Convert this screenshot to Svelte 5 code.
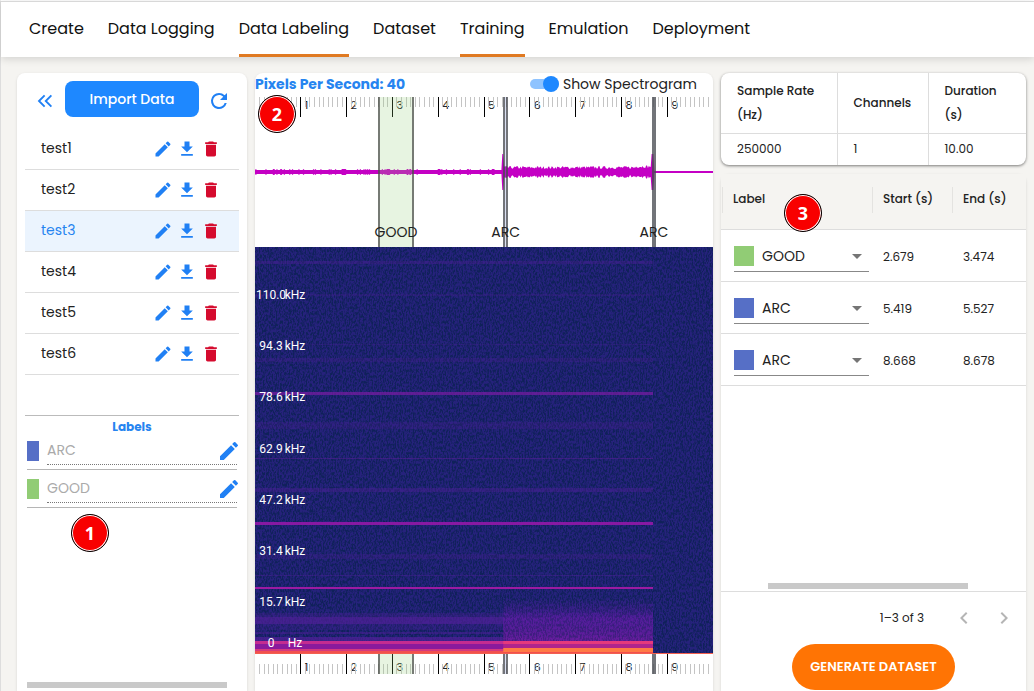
<script lang="ts">
type Segment = { id: number, label: string, start: number, end: number };

const duration = 10;
const navItems = [
    { name: 'Create', active: false },
    { name: 'Data Logging', active: false },
    { name: 'Data Labeling', active: true },
    { name: 'Dataset', active: false },
    { name: 'Training', active: true },
    { name: 'Emulation', active: false },
    { name: 'Deployment', active: false },
];
const files = ['test1', 'test2', 'test3', 'test4', 'test5', 'test6'];
const colors: Record<string, string> = { ARC: '#566fc6', GOOD: '#91cc75' };
const labels = ['ARC', 'GOOD'];

let selected = 'test3';
let showSpectrogram = true;
let segments: Segment[] = [
    { id: 1, label: 'GOOD', start: 2.679, end: 3.474 },
    { id: 2, label: 'ARC', start: 5.419, end: 5.527 },
    { id: 3, label: 'ARC', start: 8.668, end: 8.678 },
];

const ticks = Array.from({ length: 99 }, (_, i) => i + 1);

const frequencies = [
    { value: '110.0', unit: 'kHz', y: 52 },
    { value: '94.3', unit: 'kHz', y: 103 },
    { value: '78.6', unit: 'kHz', y: 154 },
    { value: '62.9', unit: 'kHz', y: 206 },
    { value: '47.2', unit: 'kHz', y: 257 },
    { value: '31.4', unit: 'kHz', y: 308 },
    { value: '15.7', unit: 'kHz', y: 359 },
    { value: '0', unit: 'Hz', y: 400 },
];

// harmonics that stop when the signal does
const bands = [
    { y: 14, h: 3, color: '#5a1fa0', opacity: 0.3 },
    { y: 47, h: 2, color: '#5a1fa0', opacity: 0.2 },
    { y: 97, h: 1, color: '#5a1fa0', opacity: 0.2 },
    { y: 111, h: 4, color: '#5a1fa0', opacity: 0.2 },
    { y: 145, h: 3, color: '#7a1ca4', opacity: 0.7 },
    { y: 175, h: 7, color: '#5a1fa0', opacity: 0.2 },
    { y: 211, h: 1, color: '#6a1fa0', opacity: 0.4 },
    { y: 241, h: 4, color: '#5a1fa0', opacity: 0.35 },
    { y: 275, h: 3, color: '#9318a8', opacity: 0.9 },
    { y: 307, h: 5, color: '#5a1fa0', opacity: 0.2 },
    { y: 328, h: 1, color: '#5a1fa0', opacity: 0.35 },
    { y: 340, h: 2, color: '#a31ba4', opacity: 0.95 },
    { y: 366, h: 4, color: '#5a1fa0', opacity: 0.25 },
    { y: 370, h: 7, color: '#5a1fa0', opacity: 0.6 },
    { y: 377, h: 6, color: '#5a1fa0', opacity: 0.2 },
    { y: 385, h: 2, color: '#5a1fa0', opacity: 0.4 },
    { y: 390, h: 4, color: '#5a1fa0', opacity: 0.6 },
    { y: 394, h: 3, color: '#c42c90', opacity: 1 },
    { y: 397, h: 5, color: '#8a1a9c', opacity: 1 },
    { y: 402, h: 2, color: '#d43a7e', opacity: 1 },
    { y: 404, h: 3, color: '#f2504f', opacity: 1 },
];

function percent(seconds: number) {
    return (seconds / duration) * 100 + '%';
}

function amplitude(t: number, noise: number) {
    if (Math.abs(t - 5.41) < 0.02 || Math.abs(t - 8.68) < 0.02) return 18;
    if (t < 5.4) return noise > 0.8 ? 3 : 2;
    if (t < 8.66) return 3 + noise * 3 + (t > 8.3 ? 1 : 0);
    return 1;
}

function waveform() {
    const top: string[] = [];
    const bottom: string[] = [];
    let seed = 7;
    for (let x = 0; x <= 500; x++) {
        seed = (seed * 16807) % 2147483647;
        const a = amplitude(x / 50, seed / 2147483647);
        top.push(`${x} ${(75 - a).toFixed(1)}`);
        bottom.unshift(`${x} ${(75 + a).toFixed(1)}`);
    }
    return 'M' + top.concat(bottom).join('L') + 'Z';
}

const wave = waveform();
</script>

{#snippet pencil()}
    <svg viewBox="0 0 24 24" aria-hidden="true"><path d="M3 17.25V21h3.75L17.81 9.94l-3.75-3.75L3 17.25zM20.71 7.04a1 1 0 0 0 0-1.41l-2.34-2.34a1 1 0 0 0-1.41 0l-1.83 1.83 3.75 3.75 1.83-1.83z" /></svg>
{/snippet}

{#snippet ruler(bottom: boolean)}
    <svg class="ruler" aria-hidden="true">
        {#each ticks as tick}
            {#if tick % 10 === 0}
                <line class="major" x1={tick + '%'} x2={tick + '%'} y1="0" y2="20" />
                <text x={tick + '%'} dx="4" y={bottom ? 17 : 12}>{tick / 10}</text>
            {:else}
                <line x1={tick + '%'} x2={tick + '%'} y1={bottom ? 10 : 0} y2={bottom ? 20 : 10} />
            {/if}
        {/each}
    </svg>
{/snippet}

<div class="app">
    <nav>
        {#each navItems as item}
            <a href="#{item.name}" class:active={item.active}>{item.name}</a>
        {/each}
    </nav>

    <main>
        <aside class="card files">
            <div class="toolbar">
                <button class="icon collapse" aria-label="Collapse">
                    <svg viewBox="0 0 24 24"><path d="M11.5 4.5 4 12l7.5 7.5M20.5 4.5 13 12l7.5 7.5" /></svg>
                </button>
                <button class="import">Import Data</button>
                <button class="icon refresh" aria-label="Refresh">
                    <svg viewBox="0 0 24 24"><path d="M17.65 6.35A7.96 7.96 0 0 0 12 4a8 8 0 1 0 7.73 10h-2.08A6 6 0 1 1 12 6c1.66 0 3.14.69 4.22 1.78L13 11h7V4l-2.35 2.35z" /></svg>
                </button>
            </div>

            <ul class="file-list">
                {#each files as file}
                    <li class:selected={file === selected}>
                        <button class="name" on:click={() => selected = file}>{file}</button>
                        <button class="icon" aria-label="Rename {file}">{@render pencil()}</button>
                        <button class="icon" aria-label="Download {file}">
                            <svg viewBox="0 0 24 24"><path d="M19 9h-4V3H9v6H5l7 7 7-7zM5 18v2h14v-2H5z" /></svg>
                        </button>
                        <button class="icon delete" aria-label="Delete {file}">
                            <svg viewBox="0 0 24 24"><path d="M6 19c0 1.1.9 2 2 2h8c1.100 0 2-.9 2-2V7H6v12zM19 4h-3.500l-1-1h-5l-1 1H5v2h14V4z" /></svg>
                        </button>
                    </li>
                {/each}
            </ul>

            <section class="labels">
                <h2>Labels</h2>
                {#each labels as label}
                    <div class="label-row">
                        <span class="swatch" style="background-color: {colors[label]}"></span>
                        <input type="text" placeholder={label} aria-label="Label {label}" />
                        <button class="icon" aria-label="Edit {label}">{@render pencil()}</button>
                    </div>
                {/each}
            </section>
            <div class="scrollbar"></div>
            <span class="badge one">1</span>
        </aside>

        <section class="card viewer">
            <header>
                <h2>Pixels Per Second: 40</h2>
                <label class="switch">
                    <input type="checkbox" bind:checked={showSpectrogram} />
                    Show Spectrogram
                </label>
            </header>

            <div class="track">
                {@render ruler(false)}
                <svg class="wave" viewBox="0 0 500 150" preserveAspectRatio="none" aria-hidden="true">
                    <path d={wave} />
                </svg>
                {#each segments as segment (segment.id)}
                    <div class="region" style="left: {percent(segment.start)}; width: {percent(segment.end - segment.start)}; background-color: {colors[segment.label]}38">
                        <span>{segment.label}</span>
                    </div>
                {/each}
                <span class="badge two">2</span>
            </div>

            {#if showSpectrogram}
                <svg class="spectrogram" role="img" aria-label="Spectrogram">
                    <defs>
                        <filter id="grain" x="0" y="0" width="100%" height="100%" color-interpolation-filters="sRGB">
                            <feTurbulence type="fractalNoise" baseFrequency="0.7 0.35" numOctaves="2" seed="4" />
                            <feColorMatrix values="0 0 0 0 0.04  0 0 0 0 0.13  0 0 0 0 0.32  4 0 0 0 -1.6" />
                        </filter>
                        <linearGradient id="burst" x1="0" y1="0" x2="0" y2="1">
                            <stop offset="0" stop-color="#5c1ca4" stop-opacity="0.05" />
                            <stop offset="0.4" stop-color="#5c1ca4" stop-opacity="0.6" />
                            <stop offset="1" stop-color="#6c1ca0" stop-opacity="0.9" />
                        </linearGradient>
                    </defs>
                    <rect width="100%" height="100%" fill="#26227c" />
                    <rect width="100%" height="100%" filter="url(#grain)" opacity="0.8" />
                    {#each bands as band}
                        <rect width="86.9%" y={band.y} height={band.h} fill={band.color} opacity={band.opacity} />
                    {/each}
                    <rect x="54.2%" width="32.7%" y="352" height="42" fill="url(#burst)" />
                    <rect x="54.2%" width="32.7%" y="352" height="42" filter="url(#grain)" opacity="0.35" />
                    <rect x="54.2%" width="32.7%" y="394" height="3" fill="#e5397c" />
                    <rect x="54.2%" width="32.7%" y="397" height="4" fill="#b0248c" />
                    <rect x="54.2%" width="32.7%" y="401" height="4" fill="#ff7a45" />
                    <rect width="100%" y="406" height="1" fill="#f2604f" />
                    {#each frequencies as f}
                        <text x="16" y={f.y}>{f.value}</text>
                        <text x="40" y={f.y}>{f.unit}</text>
                    {/each}
                </svg>
            {/if}

            <div class="track timeline">
                {@render ruler(true)}
                {#each segments as segment (segment.id)}
                    <div class="region" style="left: {percent(segment.start)}; width: {percent(segment.end - segment.start)}; background-color: {colors[segment.label]}38"></div>
                {/each}
            </div>
        </section>

        <div class="details">
            <div class="card info">
                <table>
                    <thead>
                        <tr><th>Sample Rate (Hz)</th><th>Channels</th><th>Duration (s)</th></tr>
                    </thead>
                    <tbody>
                        <tr><td>250000</td><td>1</td><td>10.00</td></tr>
                    </tbody>
                </table>
            </div>

            <div class="card segments">
                <table>
                    <thead>
                        <tr><th>Label</th><th>Start (s)</th><th>End (s)</th></tr>
                    </thead>
                    <tbody>
                        {#each segments as segment (segment.id)}
                            <tr>
                                <td>
                                    <div class="picker">
                                        <span class="swatch" style="background-color: {colors[segment.label]}"></span>
                                        <select bind:value={segment.label} aria-label="Segment label">
                                            {#each labels as label}
                                                <option>{label}</option>
                                            {/each}
                                        </select>
                                        <svg viewBox="0 0 10 5" aria-hidden="true"><path d="M0 0h10L5 5z" /></svg>
                                    </div>
                                </td>
                                <td>{segment.start.toFixed(3)}</td>
                                <td>{segment.end.toFixed(3)}</td>
                            </tr>
                        {/each}
                    </tbody>
                </table>
                <div class="scrollbar"></div>
                <div class="pager">
                    <span>1–3 of 3</span>
                    <button class="icon" aria-label="Previous page" disabled>
                        <svg viewBox="0 0 24 24"><path d="M15.41 7.41 14 6l-6 6 6 6 1.410-1.410L10.830 12z" /></svg>
                    </button>
                    <button class="icon" aria-label="Next page" disabled>
                        <svg viewBox="0 0 24 24"><path d="M10 6 8.590 7.410 13.170 12l-4.580 4.590L10 18l6-6z" /></svg>
                    </button>
                </div>
                <button class="generate">GENERATE DATASET</button>
                <span class="badge three">3</span>
            </div>
        </div>
    </main>
</div>

<style>
:global(body) {
    background-color: #f5f4f1;
    overflow: hidden;
}

.app, .app * {
    box-sizing: border-box;
}

.app {
    display: flex;
    flex-flow: column nowrap;
    height: 100vh;
    border-top: 1px solid #fff;
    border-left: 1px solid #ddd;
    color: #222;
    font-family: Poppins, Inter, sans-serif;
    font-size: 13px;
}

button, input, select {
    margin: 0;
    padding: 0;
    border: none;
    background: none;
    color: inherit;
    font: inherit;
}

h2 {
    margin: 0;
    color: #2684f0;
    font-weight: 700;
}

nav {
    display: flex;
    flex: none;
    gap: 24px;
    height: 56px;
    padding: 0 28px;
    border-top: 1px solid #d8d8d8;
    background-color: #fff;
    box-shadow: 0 2px 8px rgba(0, 0, 0, 0.14);
}

nav a {
    padding-top: 1px;
    border-bottom: 3px solid transparent;
    color: #111;
    font-size: 16px;
    line-height: 52px;
    text-decoration: none;
    white-space: nowrap;
}

nav a.active {
    border-color: #e07a22;
}

main {
    display: grid;
    grid-template-columns: 230px minmax(0, 1fr) 305px;
    gap: 8px;
    flex: 1;
    min-height: 0;
    padding: 16px 8px 0 16px;
}

.card {
    position: relative;
    border-radius: 8px;
    background-color: #fff;
    box-shadow: 0 1px 3px rgba(0, 0, 0, 0.12);
}

.icon {
    display: flex;
    align-items: center;
    justify-content: center;
    width: 24px;
    height: 24px;
    color: #2080f4;
}

.icon svg {
    width: 20px;
    height: 20px;
    fill: currentColor;
}

.badge {
    position: absolute;
    width: 38px;
    height: 38px;
    border: 1px solid #000;
    border-radius: 50%;
    background-color: #f80000;
    box-shadow: inset 0 0 0 1px #fff;
    color: #fff;
    font: 700 18px/36px "Noto Sans", sans-serif;
    text-align: center;
}

.badge.one {
    top: 441px;
    left: 54px;
}

.badge.two {
    top: -2px;
    left: 3px;
}

.badge.three {
    top: 20px;
    left: 63px;
}

.scrollbar {
    width: 200px;
    height: 6px;
    margin-top: auto;
    background-color: #c9c9c9;
}

.files {
    display: flex;
    flex-flow: column nowrap;
    padding: 8px 8px 3px;
    border-radius: 8px 8px 0 0;
}

.files .scrollbar {
    margin-left: 2px;
}

.toolbar {
    display: flex;
    align-items: center;
    gap: 8px;
    padding: 0 8px;
}

.toolbar .import {
    flex: 1;
    height: 36px;
    border-radius: 8px;
    background-color: #1e88ff;
    color: #fff;
    font-size: 14px;
    font-weight: 500;
}

.toolbar .icon {
    padding-top: 4px;
}

.toolbar .icon svg {
    width: 24px;
    height: 24px;
}

.toolbar .collapse svg {
    width: 18px;
    height: 18px;
    fill: none;
    stroke: currentColor;
    stroke-width: 2.5;
}

.file-list {
    margin: 12px 0 0;
    padding: 0;
    list-style: none;
}

.file-list li {
    display: flex;
    align-items: center;
    height: 41px;
    padding: 0 16px;
    border-bottom: 1px solid #ddd;
}

.file-list li.selected {
    background-color: #ebf4fe;
}

.file-list .name {
    flex: 1;
    padding-bottom: 2px;
    font-size: 14px;
    text-align: left;
}

.file-list .selected .name {
    color: #2684f0;
}

.file-list .delete {
    color: #d50b2e;
}

.labels {
    margin-top: 40px;
    border-top: 1px solid #bbb;
}

.labels h2 {
    font-size: 12px;
    line-height: 22px;
    text-align: center;
}

.label-row {
    display: flex;
    align-items: center;
    gap: 8px;
    position: relative;
    height: 32px;
    margin: 0 2px 6px;
    padding-bottom: 5px;
    border-bottom: 1px solid #b5b5b5;
}

.label-row .swatch {
    width: 12px;
    height: 20px;
}

.label-row input {
    flex: 1;
    min-width: 0;
    height: 27px;
    border-bottom: 1px dotted #777;
    font-size: 14px;
    outline: none;
}

.label-row input::placeholder {
    color: #aaa;
    opacity: 1;
}

.label-row .icon {
    position: absolute;
    right: -4px;
    top: 1px;
}

.label-row .icon svg {
    width: 24px;
    height: 24px;
}

.viewer {
    border-radius: 8px 8px 0 0;
}

.viewer header {
    display: flex;
    align-items: center;
    justify-content: space-between;
    height: 24px;
    padding: 0 16px 2px 0;
}

.viewer h2 {
    font-size: 14px;
}

.switch {
    display: flex;
    align-items: center;
    gap: 4px;
    font-size: 14px;
}

.switch input {
    position: relative;
    width: 29px;
    height: 10px;
    border-radius: 5px;
    background-color: #bbb;
    appearance: none;
}

.switch input::before {
    content: '';
    position: absolute;
    top: -3px;
    left: 0;
    width: 16px;
    height: 16px;
    border-radius: 50%;
    background-color: #777;
}

.switch input:checked {
    background-color: #8ec3ff;
}

.switch input:checked::before {
    left: 13px;
    background-color: #1e88ff;
}

.track {
    position: relative;
    height: 150px;
}

.timeline {
    height: 20px;
}

.ruler {
    display: block;
    width: 100%;
    height: 20px;
}

.ruler line {
    stroke: #c4c4c4;
    shape-rendering: crispEdges;
}

.ruler line.major {
    stroke: #000;
}

.ruler text {
    fill: #222;
    font-size: 11px;
}

.wave {
    position: absolute;
    inset: 0;
    width: 100%;
    height: 100%;
    fill: #c400c4;
}

.region {
    display: flex;
    align-items: flex-end;
    justify-content: center;
    position: absolute;
    top: 0;
    bottom: 0;
    border: solid rgba(70, 70, 70, 0.7);
    border-width: 0 2px;
}

.region span {
    font-size: 14px;
    line-height: 30px;
}

.spectrogram {
    display: block;
    width: 100%;
    height: 407px;
}

.spectrogram text {
    fill: #fff;
    font-family: Roboto, sans-serif;
    font-size: 12px;
    text-anchor: middle;
}

.details {
    display: flex;
    flex-flow: column nowrap;
    gap: 9px;
    min-height: 0;
}

table {
    width: 100%;
    border-collapse: collapse;
    table-layout: fixed;
}

th, td {
    font-size: 12px;
    text-align: left;
}

th {
    font-weight: 500;
}

.info {
    box-shadow: 0 1px 3px rgba(0, 0, 0, 0.5);
}

.info th, .info td {
    padding: 0 16px;
    border-right: 1px solid #ddd;
    line-height: 24px;
}

.info th:first-child {
    width: 116px;
}

.info th:nth-child(2) {
    width: 91px;
}

.info th:last-child, .info td:last-child {
    border-right: none;
}

.info th {
    height: 60px;
    padding: 6px 16px;
    border-bottom: 1px solid #ddd;
}

.info td {
    height: 31px;
}

.segments {
    display: flex;
    flex: 1;
    flex-flow: column nowrap;
    min-height: 0;
    border-radius: 8px 8px 0 0;
}

.segments table {
    flex: none;
}

.segments thead {
    background-color: #f5f4f1;
}

.segments th {
    position: relative;
    height: 56px;
    padding: 0 0 4px 12px;
    border-bottom: 1px solid #ddd;
}

.segments th::before {
    content: '';
    position: absolute;
    top: 13px;
    left: 1px;
    height: 26px;
    border-left: 1px solid #e4e3e0;
}

.segments th:first-child {
    width: 150px;
}

.segments th:nth-child(2) {
    width: 80px;
}

.segments td {
    height: 52px;
    padding: 2px 0 0 12px;
    border-bottom: 1px solid #ddd;
}

.segments td:first-child {
    padding: 2px 2px 0 13px;
}

.picker {
    display: flex;
    align-items: center;
    position: relative;
    height: 30px;
    border-bottom: 1px solid #888;
}

.picker .swatch {
    width: 20px;
    height: 20px;
}

.picker select {
    flex: 1;
    min-width: 0;
    height: 29px;
    padding-left: 8px;
    appearance: none;
    font-size: 14px;
    outline: none;
}

.picker svg {
    position: absolute;
    right: 7px;
    width: 10px;
    height: 5px;
    fill: #757575;
    pointer-events: none;
}

.segments .scrollbar {
    margin-left: 47px;
}

.pager {
    display: flex;
    align-items: center;
    justify-content: flex-end;
    gap: 16px;
    height: 53px;
    margin-top: 2px;
    padding-right: 10px;
    border-top: 1px solid #ddd;
    font-size: 12px;
}

.pager span {
    margin-right: 12px;
}

.pager .icon {
    color: #b5b5b5;
}

.pager .icon svg {
    width: 24px;
    height: 24px;
}

.generate {
    flex: none;
    align-self: center;
    height: 46px;
    margin-bottom: 1px;
    padding: 0 18px;
    border-radius: 23px;
    background-color: #ff7404;
    color: #fff;
    font-weight: 600;
}
</style>
